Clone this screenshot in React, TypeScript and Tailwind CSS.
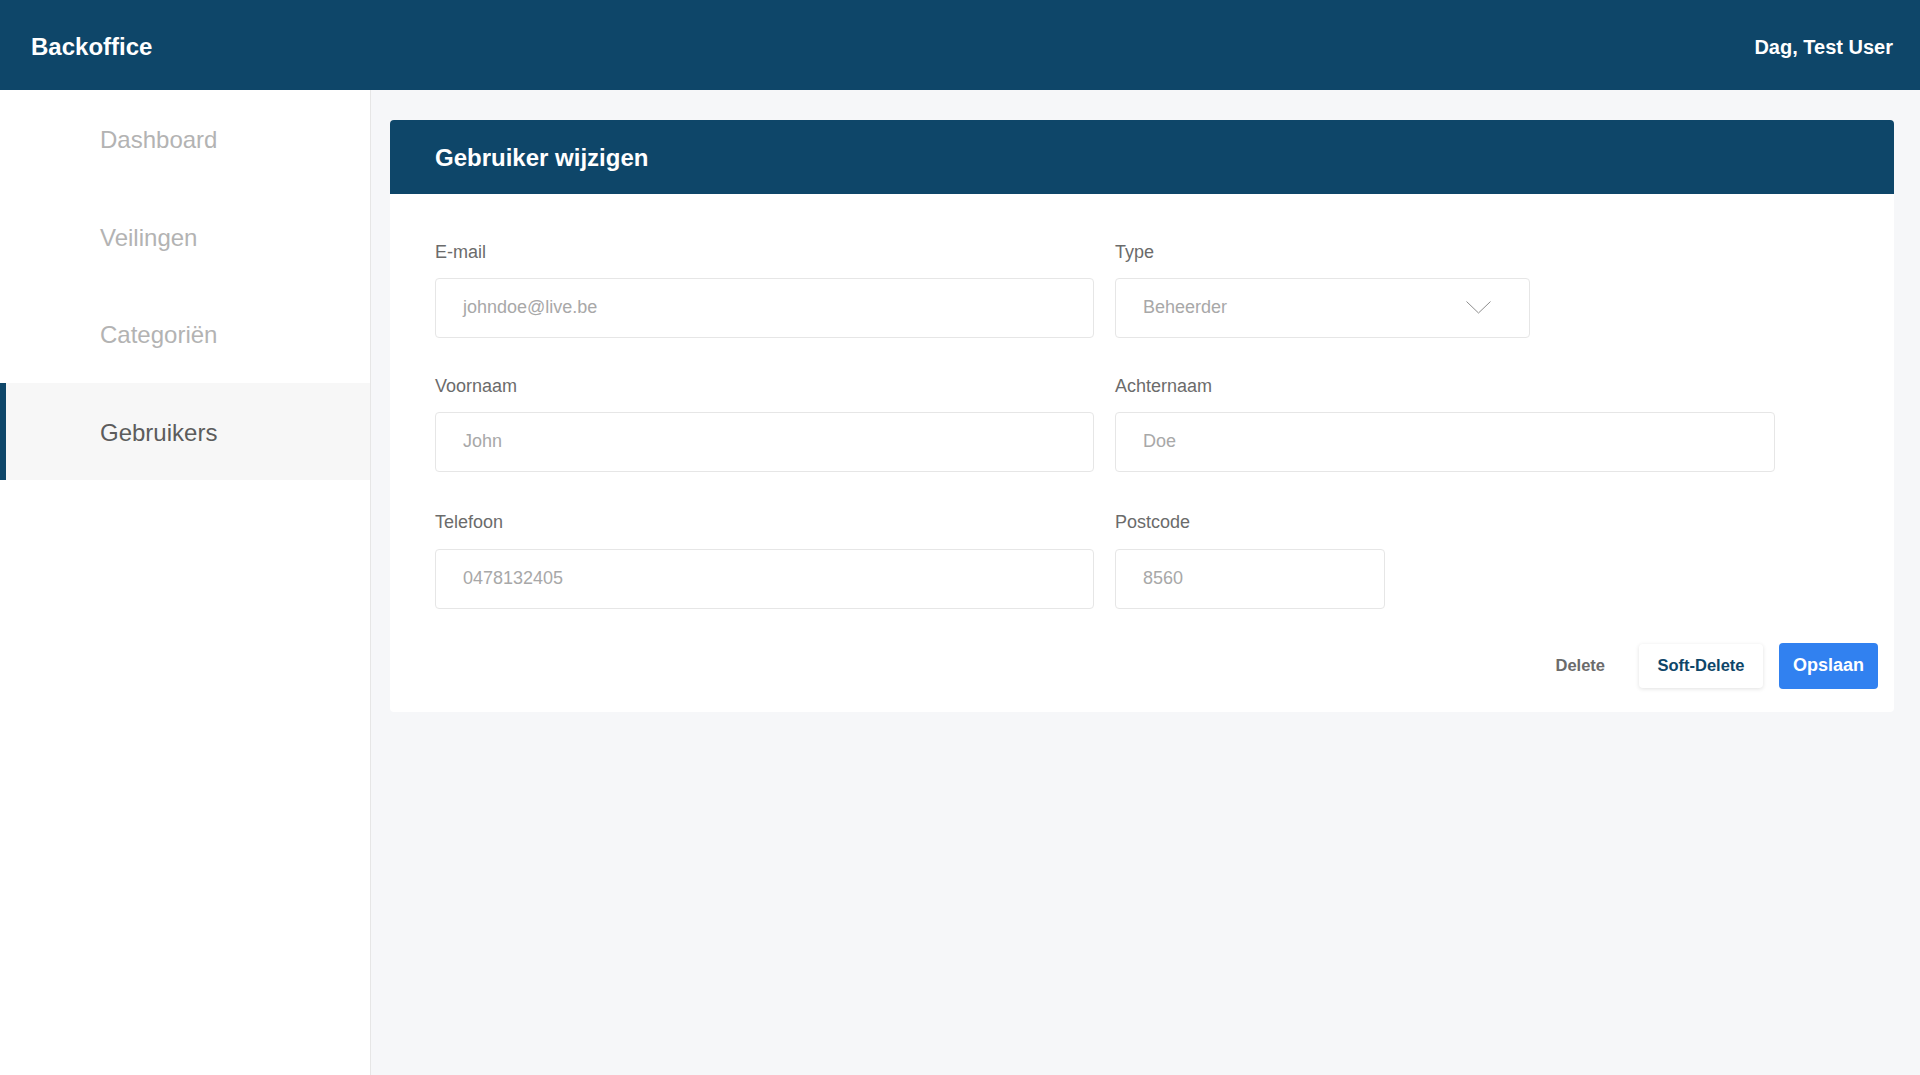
import React from 'react';

const navItems = ['Dashboard', 'Veilingen', 'Categoriën', 'Gebruikers'];

function Field({ label, value, width, select }: { label: string; value: string; width: string; select?: boolean }) {
  return (
    <div className={width}>
      <label className="block text-[18px] leading-[20.7px] text-[#6b6b6b]">{label}</label>
      <div className="mt-[15.5px] h-[60px] rounded-[4px] border border-[#e6e6e6] bg-white pl-[27px] pr-[38px] flex items-center justify-between">
        <span className="text-[18px] text-[#a8a8a8]">{value}</span>
        {select && (
          <svg width="25" height="13" viewBox="0 0 25 13" fill="none" className="shrink-0">
            <polyline points="0.5,0.5 12.5,12 24.5,0.5" stroke="#8c8c8c" strokeWidth="1" />
          </svg>
        )}
      </div>
    </div>
  );
}

export default function App() {
  const active = 'Gebruikers';

  return (
    <div className="min-h-screen h-[1075px] flex flex-col font-['Liberation_Sans',Arial,sans-serif] bg-[#f6f7f9]">
      {/* Top bar */}
      <header className="h-[90px] shrink-0 bg-[#0e4669] flex items-center justify-between pl-[31px] pr-[27px] pt-[3px]">
        <h1 className="text-[24px] font-bold text-white">Backoffice</h1>
        <span className="text-[20px] font-bold text-white">Dag, Test User</span>
      </header>

      <div className="flex flex-1 min-h-0">
        {/* Sidebar */}
        <nav className="w-[371px] shrink-0 bg-white border-r border-[#e6e6e6]">
          {navItems.map((item) => {
            const isActive = item === active;
            return (
              <div
                key={item}
                className={
                  isActive
                    ? 'h-[97.5px] flex items-center pt-[3px] pl-[94px] bg-[#f7f7f7] border-l-[6px] border-[#0e4669] text-[24px] text-[#5c5c5c]'
                    : 'h-[97.5px] flex items-center pt-[3px] pl-[100px] text-[24px] text-[#b3b3b3]'
                }
              >
                {item}
              </div>
            );
          })}
        </nav>

        {/* Main */}
        <main className="flex-1 pt-[30px] pl-[19px] pr-[26px]">
          <div className="bg-white rounded-[4px]">
            <div className="h-[73.5px] bg-[#0e4669] rounded-t-[4px] flex items-center pl-[45px] pt-[2px]">
              <h2 className="text-[24px] font-bold text-white">Gebruiker wijzigen</h2>
            </div>

            <div className="pt-[48px] pl-[45px] pr-[16px] pb-[23px]">
              <div className="flex gap-[21px]">
                <Field label="E-mail" value="johndoe@live.be" width="w-[659px]" />
                <Field label="Type" value="Beheerder" width="w-[415px]" select />
              </div>
              <div className="flex gap-[21px] mt-[38px]">
                <Field label="Voornaam" value="John" width="w-[659px]" />
                <Field label="Achternaam" value="Doe" width="w-[660px]" />
              </div>
              <div className="flex gap-[21px] mt-[40.5px]">
                <Field label="Telefoon" value="0478132405" width="w-[659px]" />
                <Field label="Postcode" value="8560" width="w-[270px]" />
              </div>

              <div className="flex justify-end items-center gap-[16px] mt-[34px]">
                <button className="h-[44px] px-[18px] rounded-[4px] text-[16.5px] font-bold text-[#6b6b6b]">Delete</button>
                <button className="h-[44px] w-[124px] rounded-[4px] bg-white shadow-[0_1px_4px_rgba(0,0,0,0.12)] text-[16.5px] font-bold text-[#0e4669]">
                  Soft-Delete
                </button>
                <button className="h-[46px] w-[99px] rounded-[4px] bg-[#3181f0] text-[18px] font-bold text-white">Opslaan</button>
              </div>
            </div>
          </div>
        </main>
      </div>
    </div>
  );
}
